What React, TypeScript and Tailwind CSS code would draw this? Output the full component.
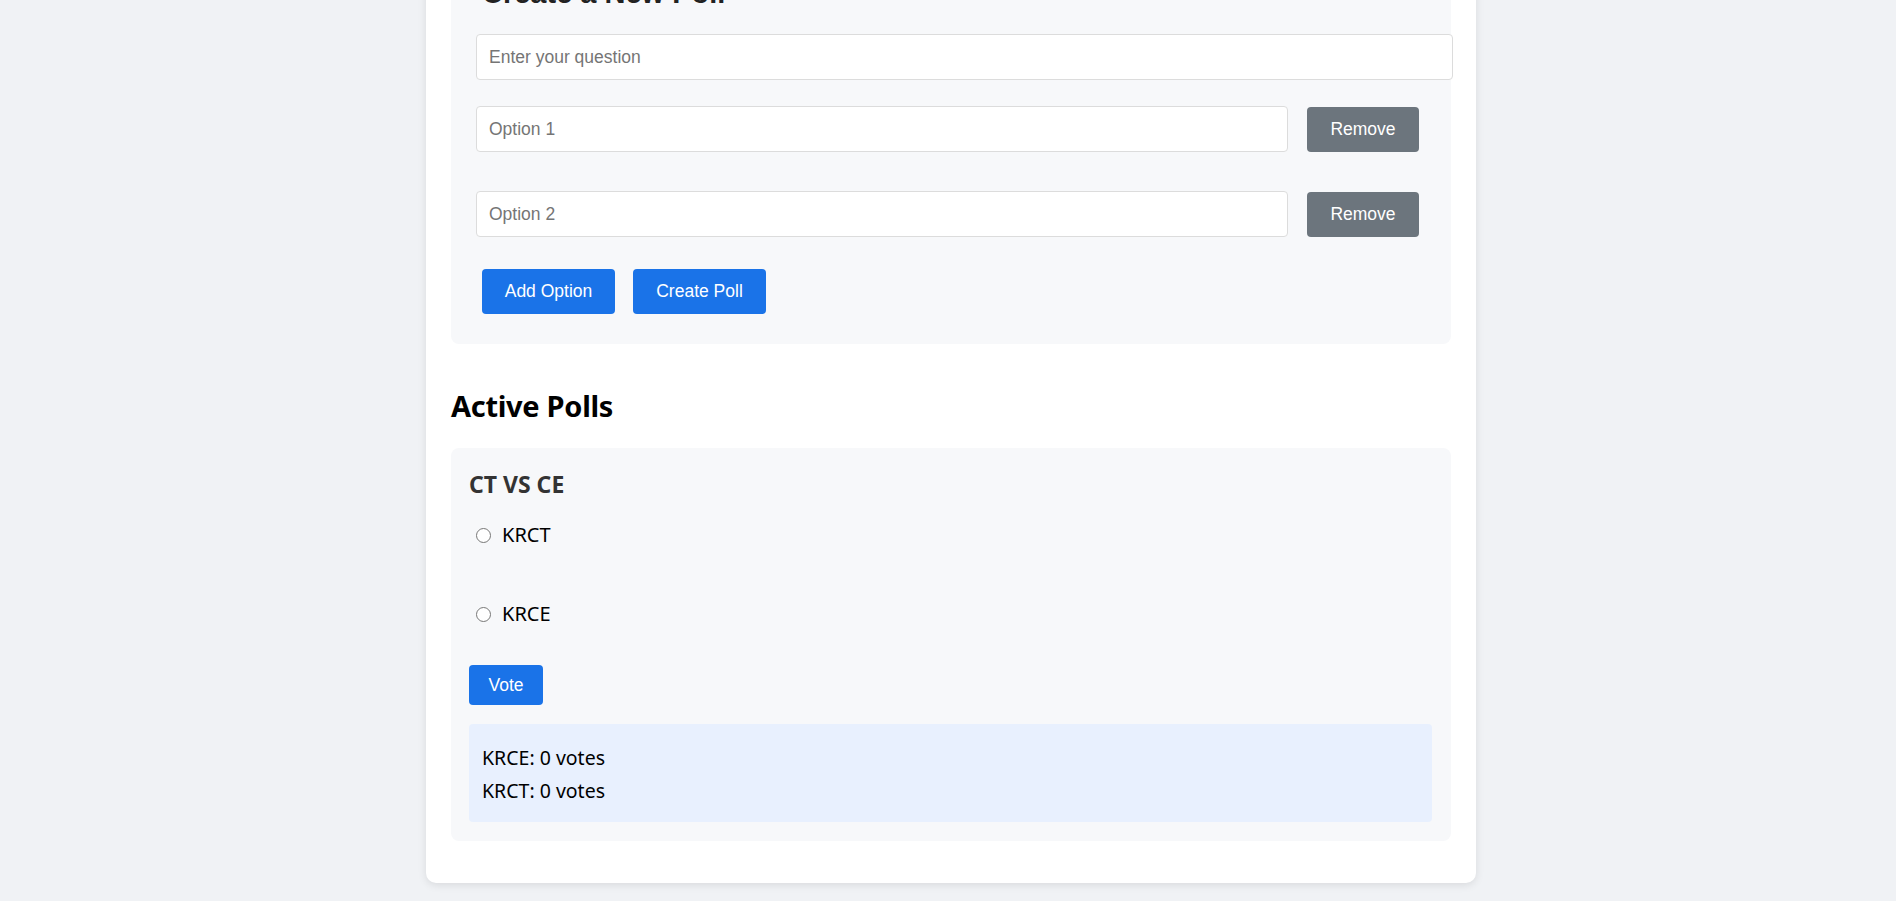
import { useState } from "react";

const options = ["Option 1", "Option 2"];
const choices = ["KRCT", "KRCE"];
const results = [
  { label: "KRCE", votes: 0 },
  { label: "KRCT", votes: 0 },
];

const sans = "font-['Noto_Sans',sans-serif]";
const arial = "font-['Liberation_Sans',Arial,sans-serif]";

export default function App() {
  const [picked, setPicked] = useState<string | null>(null);

  return (
    <div className={`min-h-screen bg-[#f0f2f5] pb-[18px] pl-[6px] ${sans}`}>
      <div className="mx-auto -mt-[69px] w-[1050px] rounded-[10px] bg-white px-[25px] pt-[25px] pb-[42px] shadow-[0_2px_8px_rgba(0,0,0,0.1)]">
        {/* create poll form */}
        <div className="rounded-lg bg-[#f7f8fa] pt-[20px] pb-[30px] pl-[25px]">
          <h2 className={`${arial} mb-[24px] pl-[6px] text-[29px] leading-[34px] font-bold text-[#222]`}>
            Create a New Poll
          </h2>
          <input
            type="text"
            placeholder="Enter your question"
            className={`${arial} h-[46px] w-[977px] rounded-[4px] border border-[#dcdcdc] bg-white px-[12px] text-[17.5px] placeholder:text-[#757575] outline-none`}
          />
          <div className="mt-[26px] flex flex-col gap-[39px]">
            {options.map((o) => (
              <div key={o} className="flex items-center gap-[19px]">
                <input
                  type="text"
                  placeholder={o}
                  className={`${arial} h-[46px] w-[812px] rounded-[4px] border border-[#dcdcdc] bg-white px-[12px] text-[17.5px] placeholder:text-[#757575] outline-none`}
                />
                <button className={`${arial} h-[45px] w-[112px] rounded-[4px] bg-[#6c757d] text-[17.5px] text-white`}>
                  Remove
                </button>
              </div>
            ))}
          </div>
          <div className="mt-[32px] ml-[6px] flex gap-[18px]">
            <button className={`${arial} h-[45px] w-[133px] rounded-[4px] bg-[#1a73e8] text-[17.5px] text-white`}>
              Add Option
            </button>
            <button className={`${arial} h-[45px] w-[133px] rounded-[4px] bg-[#1a73e8] text-[17.5px] text-white`}>
              Create Poll
            </button>
          </div>
        </div>

        <h2 className="mt-[44px] mb-[24px] text-[29px] leading-[36px] font-bold tracking-[-0.3px] text-black">Active Polls</h2>

        {/* poll card */}
        <div className="rounded-lg bg-[#f7f8fa] px-[18px] pt-[18px] pb-[19px]">
          <h3 className="mt-[4px] text-[23px] leading-[28px] font-bold text-[#333]">CT VS CE</h3>
          <div className="mt-[23px] flex flex-col gap-[51px]">
            {choices.map((c) => (
              <label key={c} className="ml-[7px] flex h-[28px] items-center gap-[11px] text-[20px] text-black">
                <input
                  type="radio"
                  name="poll"
                  checked={picked === c}
                  onChange={() => setPicked(c)}
                  className="m-0 h-[15px] w-[15px]"
                />
                {c}
              </label>
            ))}
          </div>
          <button className={`${arial} mt-[37px] h-[40px] w-[74px] rounded-[4px] bg-[#1a73e8] text-[17.5px] text-white`}>
            Vote
          </button>
          <div className="mt-[19px] w-[963px] rounded-[4px] bg-[#e8f0fe] px-[13px] pt-[17px] pb-[15px] text-[19.5px] leading-[33px] text-black">
            {results.map((r) => (
              <div key={r.label}>
                {r.label}: {r.votes} votes
              </div>
            ))}
          </div>
        </div>
      </div>
    </div>
  );
}
